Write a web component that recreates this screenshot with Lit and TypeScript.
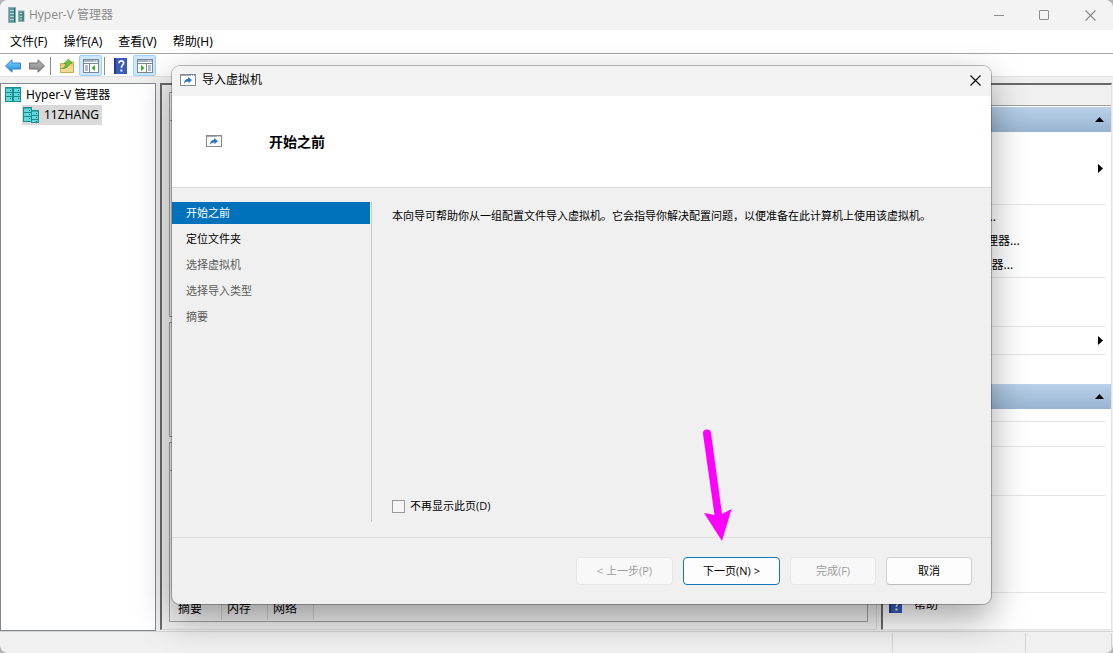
import { LitElement, html, css, svg, nothing } from "lit";
import { customElement, property, state } from "lit/decorators.js";
import { classMap } from "lit/directives/class-map.js";

const rack = (x: number, y: number, w: number, h: number) => svg`
  <rect x=${x + 0.5} y=${y + 0.5} width=${w - 1} height=${h - 1} fill="#5cdcdf" stroke="#1d8a8e"/>
  <path d="M${x + 1} ${y + 1.5}h${w - 2}" stroke="#3aaeb2"/>
  <path d="M${x} ${y + 5.5}h${w}M${x} ${y + 9.5}h${w}" stroke="#1d8a8e"/>
  <path d="M${x + w - 3} ${y + 3.5}h1M${x + w - 3} ${y + 7.5}h1M${x + w - 3} ${y + 11.5}h1" stroke="#0b5558"/>`;

const icons = {
  app: html`<svg width="17" height="16" viewBox="0 0 17 16" aria-hidden="true">
    <rect x=".5" y=".5" width="7" height="15" fill="#5b979b" stroke="#8ab0b2"/>
    <path d="M2 3.5h4M2 6.5h4M2 9.5h4M2 12.5h4" stroke="#a9d3d5"/>
    <path d="M6.500 1v14" stroke="#2e6468"/>
    <rect x="10.500" y="4" width="5.500" height="10.500" fill="#5b979b" stroke="#8ab0b2"/>
    <path d="M12 6.500h2M12 9.500h2M12 12h2" stroke="#a9d3d5"/>
    <path d="M15 4.500v9.500" stroke="#2e6468"/>
  </svg>`,
  servers: html`<svg width="16" height="16" viewBox="0 0 16 16" aria-hidden="true">${rack(0, 0, 8, 15)}${rack(8, 0, 8, 15)}</svg>`,
  server: html`<svg width="16" height="16" viewBox="0 0 16 16" aria-hidden="true">${rack(0, 0, 9, 15)}${rack(8, 3, 8, 13)}</svg>`,
  back: html`<svg width="18" height="16" viewBox="0 0 18 16" aria-hidden="true">
    <defs><linearGradient id="b" x2="0" y2="1"><stop stop-color="#8ad8fc"/><stop offset="1" stop-color="#1687dc"/></linearGradient></defs>
    <path d="M1.500 8 8 1.800V5h8.500v6H8v3.200z" fill="url(#b)" stroke="#3a84c0" stroke-linejoin="round"/>
  </svg>`,
  forward: html`<svg width="18" height="16" viewBox="0 0 18 16" aria-hidden="true">
    <defs><linearGradient id="f" x2="0" y2="1"><stop stop-color="#b8b8b8"/><stop offset="1" stop-color="#868686"/></linearGradient></defs>
    <path d="M16.500 8 10 1.800V5H1.500v6H10v3.200z" fill="url(#f)" stroke="#6e6e6e" stroke-linejoin="round"/>
  </svg>`,
  folder: html`<svg width="16" height="16" viewBox="0 0 16 16" aria-hidden="true">
    <path d="M1.500 5.500h5l1-1.500h7v10.500h-13z" fill="#ecca72" stroke="#c9a650"/>
    <path d="M2 8h12v6H2z" fill="#f6dc92"/>
    <path d="M2.500 10.500C5 10 6.500 8.500 7 5.500H5L9.500 1.200 13 5l-2.300.500C10 8.500 7 10.800 2.500 10.500z" fill="#74c23f" stroke="#4f9a2a" stroke-width=".8"/>
  </svg>`,
  paneLeft: html`<svg width="16" height="14" viewBox="0 0 16 14" aria-hidden="true">
    <rect x=".5" y=".5" width="15" height="13" fill="#fff" stroke="#7b8696"/>
    <path d="M1 2h14" stroke="#aab4c2" stroke-width="2"/><path d="M11 2h1m1 0h1" stroke="#fff"/>
    <path d="M1 4.500h14M6.500 5v8" stroke="#7b8696"/>
    <path d="M2 7h3M2 9h3M2 11h3" stroke="#5b7fb4"/><path d="M12 6v6L8.500 9z" fill="#3fae2a"/>
  </svg>`,
  paneRight: html`<svg width="16" height="14" viewBox="0 0 16 14" aria-hidden="true">
    <rect x=".5" y=".5" width="15" height="13" fill="#fff" stroke="#7b8696"/>
    <path d="M1 2h14" stroke="#aab4c2" stroke-width="2"/><path d="M11 2h1m1 0h1" stroke="#fff"/>
    <path d="M1 4.500h14M9.500 5v8" stroke="#7b8696"/>
    <path d="M11 7h3M11 9h3M11 11h3" stroke="#5b7fb4"/><path d="M4 6v6L7.500 9z" fill="#3fae2a"/>
  </svg>`,
  help: html`<svg width="13" height="16" viewBox="0 0 13 16" aria-hidden="true">
    <path d="M0 0h13v16H0z" fill="#3b5cb8"/><path d="M0 0h2v16H0z" fill="#23398c"/>
    <path d="M5 5.200C5 3.300 6.200 2.800 7.300 2.800c1.300 0 2.300.8 2.300 2.100C9.600 7 7.400 7.200 7.400 9.800" fill="none" stroke="#fff" stroke-width="1.700"/>
    <path d="M6.400 11.500h2v2h-2z" fill="#fff"/>
  </svg>`,
  wizard: html`<svg width="16" height="13" viewBox="0 0 16 13" aria-hidden="true">
    <rect x=".5" y=".5" width="15" height="11" fill="#fff" stroke="#85898e"/>
    <path d="M1 1.500h14" stroke="#a4a8ad"/><path d="M11 1.500h1m1 0h1" stroke="#fff"/>
    <path d="M4 10C3.800 7 5.500 5 8 4.800V3L12 6 8.500 9.300V7.500C6.500 7.500 5 8.200 4 10z" fill="#2f78bd"/>
  </svg>`,
  up: html`<svg width="9" height="5" viewBox="0 0 9 5" aria-hidden="true"><path d="M0 5 4.500 0 9 5z"/></svg>`,
  right: html`<svg width="5" height="9" viewBox="0 0 5 9" aria-hidden="true"><path d="M0 0 5 4.500 0 9z"/></svg>`,
  minimize: html`<svg width="11" height="11" viewBox="0 0 11 11" aria-hidden="true"><path d="M1 5.500h10" stroke="currentColor"/></svg>`,
  maximize: html`<svg width="11" height="11" viewBox="0 0 11 11" aria-hidden="true"><rect x=".5" y=".5" width="9" height="9" rx=".5" fill="none" stroke="currentColor"/></svg>`,
  close: html`<svg width="11" height="11" viewBox="0 0 11 11" aria-hidden="true"><path d="M.5.5l10 10M10.500.5l-10 10" stroke="currentColor" stroke-width="1.100"/></svg>`,
};

const base = css`
  * { box-sizing: border-box; }
  svg { display: block; flex: none; }
  button { font: inherit; color: inherit; border: 0; background: none; padding: 0; }
  ul, ol { list-style: none; margin: 0; padding: 0; }
  h1, h2, p { margin: 0; font-weight: 400; font-size: inherit; }
`;

@customElement("import-wizard")
class ImportWizard extends LitElement {
  @property({ type: Number }) step = 0;
  @state() private skipIntro = false;

  private steps = ["开始之前", "定位文件夹", "选择虚拟机", "选择导入类型", "摘要"];

  static styles = [base, css`
    :host {
      display: flex; flex-direction: column; background: #f0f0f0; color: #000;
      border-radius: 8px; font-size: 11px; line-height: 16px;
      box-shadow: 0 0 0 1px rgba(0, 0, 0, .26), 0 14px 36px rgba(0, 0, 0, .36);
    }
    .title { display: flex; align-items: center; gap: 6px; height: 30px; padding: 0 10px 2px 8px; background: #f3f3f3; border-radius: 8px 8px 0 0; font-size: 12px; }
    .title h2 { flex: 1; }
    .banner { display: flex; align-items: center; gap: 47px; height: 92px; padding: 0 34px; background: #fff; border-bottom: 1px solid #dcdcdc; font-size: 14px; line-height: 20px; }
    .banner h2 { font-size: 14px; font-weight: 700; }
    .body { display: flex; flex: 1; padding: 14px 20px 15px 0; }
    .steps { display: flex; flex-direction: column; gap: 4px; width: 200px; padding-right: 1px; border-right: 1px solid #c8c8c8; }
    .step { height: 22px; line-height: 22px; padding: 0 14px; color: #5c5c5c; }
    .step.next { color: #000; }
    .step.current { color: #fff; background: #0072bc; }
    .page { display: flex; flex: 1; flex-direction: column; justify-content: space-between; padding: 6px 0 8px 20px; }
    .skip { display: flex; align-items: center; gap: 5px; }
    .skip input { appearance: none; width: 13px; height: 13px; margin: 0; border: 1px solid #999; background: #f5f5f5; }
    .skip input:checked { background: #0072bc; }
    .actions { display: flex; justify-content: flex-end; gap: 10px; padding: 19px; border-top: 1px solid #dcdcdc; }
    .actions button { min-width: 86px; height: 28px; border: 1px solid #d0d0d0; border-bottom-color: #bcbcbc; border-radius: 4px; background: #fdfdfd; }
    .actions .wide { min-width: 97px; }
    .actions .primary { border-color: #0f76b8; }
    .actions button:disabled { color: #9d9d9d; border-color: #e6e6e6; background: #f8f8f8; }
  `];

  render() {
    return html`
      <header class="title">${icons.wizard}<h2>导入虚拟机</h2><button aria-label="关闭">${icons.close}</button></header>
      <div class="banner">${icons.wizard}<h2>${this.steps[this.step]}</h2></div>
      <div class="body">
        <ol class="steps">
          ${this.steps.map((name, i) => html`<li class=${classMap({ step: true, current: i === this.step, next: i === this.step + 1 })}>${name}</li>`)}
        </ol>
        <div class="page">
          <p>本向导可帮助你从一组配置文件导入虚拟机。它会指导你解决配置问题，以便准备在此计算机上使用该虚拟机。</p>
          <label class="skip"><input type="checkbox" .checked=${this.skipIntro}
            @change=${(e: Event) => (this.skipIntro = (e.target as HTMLInputElement).checked)}>不再显示此页(D)</label>
        </div>
      </div>
      <footer class="actions">
        <button class="wide" disabled>&lt; 上一步(P)</button>
        <button class="wide primary">下一页(N) &gt;</button>
        <button disabled>完成(F)</button>
        <button>取消</button>
      </footer>`;
  }
}

type Row = { label?: string; icon?: boolean; more?: boolean };
type Block = { size: string; rows: Row[] };

@customElement("action-pane")
class ActionPane extends LitElement {
  private host: Block[] = [
    { size: "three", rows: [{}, { more: true }, {}] },
    { size: "three", rows: [{ label: "Hyper-V 设置..." }, { label: "虚拟交换机管理器..." }, { label: "虚拟 SAN 管理器..." }] },
    { size: "two", rows: [] },
    { size: "view", rows: [{ more: true }] },
    { size: "last", rows: [] },
  ];
  private machine: Block[] = [
    { size: "half", rows: [] },
    { size: "one", rows: [] },
    { size: "two", rows: [] },
    { size: "four", rows: [] },
    { size: "one", rows: [{ label: "帮助", icon: true }] },
  ];

  static styles = [base, css`
    :host { display: block; background: #fff; border: 1px solid #e3e3e3; border-left: 2px solid #696969; border-top: 2px solid #696969; line-height: 16px; }
    .caption { height: 21px; background: #f0f0f0; border-bottom: 1px solid #a0a0a0; margin-bottom: 1px; }
    .group { display: flex; align-items: center; justify-content: flex-end; width: 100%; height: 25px; padding: 0 7px; background: linear-gradient(#b9d1ea, #99b4d1); }
    .block { margin-right: 5px; border-bottom: 1px solid #e6e6e6; }
    .block:last-child { border: 0; }
    .half { min-height: 13px; } .one { min-height: 25px; } .two { min-height: 49px; }
    .three { min-height: 73px; } .four { min-height: 97px; } .view { min-height: 28px; }
    .last { min-height: 29px; }
    .row { display: flex; align-items: center; height: 24px; padding-left: 6px; }
    .view .row { height: 27px; }
    .icon { width: 25px; }
    .label { flex: 1; }
    .more { padding-right: 3px; }
  `];

  private block(b: Block) {
    return html`<ul class="block ${b.size}">${b.rows.map((r) => html`<li class="row">
      <span class="icon">${r.icon ? icons.help : nothing}</span>
      <span class="label">${r.label ?? nothing}</span>
      ${r.more ? html`<span class="more">${icons.right}</span>` : nothing}</li>`)}</ul>`;
  }

  render() {
    return html`<div class="caption"></div>
      <button class="group" aria-label="折叠">${icons.up}</button>
      <div>${this.host.map((b) => this.block(b))}</div>
      <button class="group" aria-label="折叠">${icons.up}</button>
      <div>${this.machine.map((b) => this.block(b))}</div>`;
  }
}

@customElement("app-root")
class AppRoot extends LitElement {
  static styles = [base, css`
    :host { display: block; position: relative; background: #b4b4b4; color: #000; font: 12px/16px "Open Sans", "Noto Sans CJK SC", sans-serif; }
    .window { display: flex; flex-direction: column; min-height: 100vh; background: #f0f0f0; border-radius: 8px; overflow: hidden; }
    .title { display: flex; align-items: center; gap: 4px; height: 30px; padding: 0 17px 0 8px; background: #f3f3f3; color: #8c8c8c; }
    .title h1 { flex: 1; }
    .controls { display: flex; gap: 35px; }
    .menu { display: flex; gap: 16px; height: 24px; align-items: center; padding: 0 10px; background: #fff; border-bottom: 1px solid #a6a6a6; }
    .tools { display: flex; align-items: flex-end; gap: 1px; height: 23px; padding-left: 1px; background: #fff; border-bottom: 1px solid #e0e0e0; }
    .tool { display: grid; place-items: center; width: 23px; height: 21px; border: 1px solid transparent; border-radius: 2px; }
    .tool.on { background: #cce8ff; border-color: #99d1ff; }
    .rule { width: 1px; height: 18px; margin: 0 3px 1px 1px; background: #8d8d8d; }
    .panes { display: grid; grid-template-columns: 156px 1fr 231px; column-gap: 4px; flex: 1; padding: 6px 1px 0 0; }
    .tree { background: #fff; border: 1px solid #828790; padding: 1px 4px; }
    .menu, .tree, .actions { font-family: "Noto Sans", "Noto Sans CJK SC", sans-serif; }
    .node { display: flex; align-items: center; gap: 5px; height: 20px; }
    .picked { width: max-content; margin-left: 17px; padding: 0 3px 0 1px; background: #d9d9d9; }
    .center { display: flex; flex-direction: column; gap: 5px; padding: 7px 8px 7px 7px; border: 1px solid #d8d8d8; border-left: 2px solid #696969; border-top: 2px solid #696969; }
    .center, .actions { margin-bottom: 1px; }
    .box { border: 1px solid #a0a0a0; }
    .machines { flex: 0 0 225px; } .checkpoints { flex: 0 0 115px; }
    .details { display: flex; flex-direction: column; flex: 1; justify-content: space-between; }
    .strip { height: 28px; border-bottom: 1px solid #a0a0a0; }
    .tabs { display: flex; padding: 0 0 1px 3px; }
    .tab { height: 22px; width: 46px; border-right: 1px solid #d0d0d0; background: #ececec; line-height: 18px; text-align: left; padding-left: 5px; }
    .tab.active { background: none; line-height: 22px; width: 49px; }
    .status { display: flex; justify-content: flex-end; height: 22px; border-top: 1px solid #d4d4d4; padding: 1px 1px 1px; }
    .cell { border-left: 1px solid #d4d4d4; width: 133px; }
    .cell.end { width: 87px; border-right: 1px solid #d4d4d4; }
    .dialog { position: absolute; left: 172px; right: 122px; top: 66px; height: 538px; }
    .pointer { position: absolute; left: 703px; top: 428px; }
  `];

  render() {
    return html`
      <div class="window">
        <header class="title">${icons.app}<h1>Hyper-V 管理器</h1>
          <div class="controls">
            <button aria-label="最小化">${icons.minimize}</button>
            <button aria-label="最大化">${icons.maximize}</button>
            <button aria-label="关闭">${icons.close}</button>
          </div>
        </header>
        <nav class="menu">${["文件(F)", "操作(A)", "查看(V)", "帮助(H)"].map((m) => html`<button>${m}</button>`)}</nav>
        <div class="tools">
          <button class="tool" aria-label="后退">${icons.back}</button>
          <button class="tool" aria-label="前进">${icons.forward}</button>
          <span class="rule"></span>
          <button class="tool" aria-label="上一级">${icons.folder}</button>
          <button class="tool on" aria-label="控制台树">${icons.paneLeft}</button>
          <span class="rule"></span>
          <button class="tool" aria-label="帮助">${icons.help}</button>
          <button class="tool on" aria-label="操作窗格">${icons.paneRight}</button>
        </div>
        <main class="panes">
          <ul class="tree">
            <li class="node">${icons.servers}<span>Hyper-V 管理器</span></li>
            <li class="node picked">${icons.server}<span>11ZHANG</span></li>
          </ul>
          <section class="center">
            <div class="box machines"><div class="strip"></div></div>
            <div class="box checkpoints"></div>
            <div class="box details">
              <div class="strip"></div>
              <div class="tabs">
                <button class="tab active">摘要</button><button class="tab">内存</button><button class="tab">网络</button>
              </div>
            </div>
          </section>
          <action-pane class="actions"></action-pane>
        </main>
        <footer class="status"><span class="cell"></span><span class="cell end"></span></footer>
      </div>
      <import-wizard class="dialog" role="dialog" aria-label="导入虚拟机"></import-wizard>
      <svg class="pointer" width="30" height="114" viewBox="0 0 30 114" aria-hidden="true">
        <path d="M0 6A4 4 0 0 1 8 5L19 86 28.500 81 19 113 1 85 11.500 87z" fill="#f0f"/>
      </svg>`;
  }
}
